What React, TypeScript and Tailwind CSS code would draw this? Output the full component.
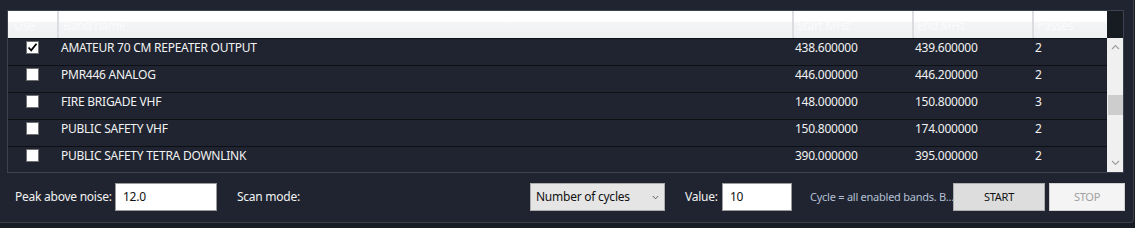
import React from "react";

const rows = [
  { use: true, name: "AMATEUR 70 CM REPEATER OUTPUT", start: "438.600000", end: "439.600000", passes: "2" },
  { use: false, name: "PMR446 ANALOG", start: "446.000000", end: "446.200000", passes: "2" },
  { use: false, name: "FIRE BRIGADE VHF", start: "148.000000", end: "150.800000", passes: "3" },
  { use: false, name: "PUBLIC SAFETY VHF", start: "150.800000", end: "174.000000", passes: "2" },
  { use: false, name: "PUBLIC SAFETY TETRA DOWNLINK", start: "390.000000", end: "395.000000", passes: "2" },
];

function Check({ checked }: { checked: boolean }) {
  return (
    <div className="w-[13px] h-[13px] bg-white border border-[#707070] flex items-center justify-center">
      {checked && (
        <svg width="11" height="11" viewBox="0 0 11 11">
          <path d="M1.5 5.5 L4.2 8.3 L9.5 1.8" fill="none" stroke="#000" strokeWidth="1.8" />
        </svg>
      )}
    </div>
  );
}

export default function App() {
  return (
    <div
      className="w-[1135px] h-[228px] bg-[#181c24] overflow-hidden text-[12px] tracking-[-0.25px] whitespace-nowrap"
      style={{ fontFamily: '"Noto Sans", "Open Sans", sans-serif' }}
    >
      <div className="w-[1134px] h-[223px] bg-[#1f2430] border-r border-b border-[#3a404a] rounded-br-[4px] pt-[10px] pl-[7px] flex flex-col">
        {/* Grid */}
        <div className="w-[1117px] h-[163px] shrink-0 border border-[#3c4350] flex">
          <div className="w-[1099px] shrink-0 flex flex-col">
            {/* Header */}
            <div className="h-[27px] shrink-0 flex bg-[linear-gradient(to_bottom,#ffffff_0%,#ffffff_38%,#f4f5f7_42%,#eef0f2_100%)] text-[#fbfbfb] text-[12px] leading-[29px]">
              <div className="w-[49px] shrink-0 pl-[6px]">Use</div>
              <div className="w-[735px] shrink-0 border-l-2 border-[#dcdde0] pl-[4px]">Band name</div>
              <div className="w-[120px] shrink-0 border-l-2 border-[#dcdde0] pl-[3px]">Start MHz</div>
              <div className="w-[120px] shrink-0 border-l-2 border-[#dcdde0] pl-[3px]">End MHz</div>
              <div className="flex-1 border-l-2 border-[#dcdde0] pl-[3px]">Passes</div>
            </div>
            {/* Body */}
            <div className="flex-1 overflow-hidden">
              {rows.map((r, i) => (
                <div key={i} className="h-[27px] border-t border-[#0d1015] flex items-start text-[#f2f2f2] leading-[16px]">
                  <div className="w-[49px] shrink-0 flex pl-[18px] pt-[2px]">
                    <Check checked={r.use} />
                  </div>
                  <div className="w-[735px] shrink-0 pl-[4px] pt-[1px]">{r.name}</div>
                  <div className="w-[120px] shrink-0 pl-[3px] pt-[1px]">{r.start}</div>
                  <div className="w-[120px] shrink-0 pl-[3px] pt-[1px]">{r.end}</div>
                  <div className="flex-1 pl-[3px] pt-[1px]">{r.passes}</div>
                </div>
              ))}
            </div>
          </div>
          {/* Scrollbar column */}
          <div className="flex-1 flex flex-col">
            <div className="h-[27px] shrink-0 bg-[#171b22]" />
            <div className="flex-1 bg-[#f0f0f0] flex flex-col items-center">
              <div className="h-[18px] flex items-center justify-center">
                <svg width="9" height="6" viewBox="0 0 9 6">
                  <path d="M1 5 L4.5 1.5 L8 5" fill="none" stroke="#a0a0a0" strokeWidth="1.2" />
                </svg>
              </div>
              <div className="h-[39px]" />
              <div className="w-[15px] h-[20px] bg-[#cdcdcd]" />
              <div className="flex-1" />
              <div className="h-[18px] flex items-center justify-center">
                <svg width="9" height="6" viewBox="0 0 9 6">
                  <path d="M1 1 L4.5 4.5 L8 1" fill="none" stroke="#a0a0a0" strokeWidth="1.2" />
                </svg>
              </div>
            </div>
          </div>
        </div>

        {/* Controls */}
        <div className="mt-[10px] h-[28px] shrink-0 flex items-center text-[#f2f2f2]">
          <span className="ml-[8px] w-[100px] shrink-0">Peak above noise:</span>
          <div className="w-[102px] shrink-0 h-[28px] bg-white border border-[#9a9a9a] text-[#111] pl-[7px] leading-[26px]">12.0</div>
          <span className="ml-[20px] w-[293px] shrink-0">Scan mode:</span>
          <div className="w-[135px] shrink-0 h-[28px] bg-[#e5e5e5] border border-[#acacac] text-[#111] pl-[5px] flex items-center justify-between pr-[5px]">
            <span>Number of cycles</span>
            <svg width="7" height="5" viewBox="0 0 7 5">
              <path d="M0.8 1 L3.5 3.8 L6.2 1" fill="none" stroke="#606060" strokeWidth="1" />
            </svg>
          </div>
          <span className="ml-[20px] w-[37px] shrink-0">Value:</span>
          <div className="w-[70px] shrink-0 h-[28px] bg-white border border-[#9a9a9a] text-[#111] pl-[7px] leading-[26px]">10</div>
          <span className="ml-[18px] w-[143px] shrink-0 overflow-hidden text-[11px] text-[#b4c0d4]">Cycle = all enabled bands. B...</span>
          <div className="w-[92px] shrink-0 h-[28px] bg-[#dddddd] border border-[#adadad] text-[#111] text-[11px] flex items-center justify-center">START</div>
          <div className="ml-[4px] w-[76px] shrink-0 h-[28px] bg-[#f4f4f4] border border-[#d0d0d0] text-[#a0a0a0] text-[11px] flex items-center justify-center">STOP</div>
        </div>
      </div>
    </div>
  );
}
